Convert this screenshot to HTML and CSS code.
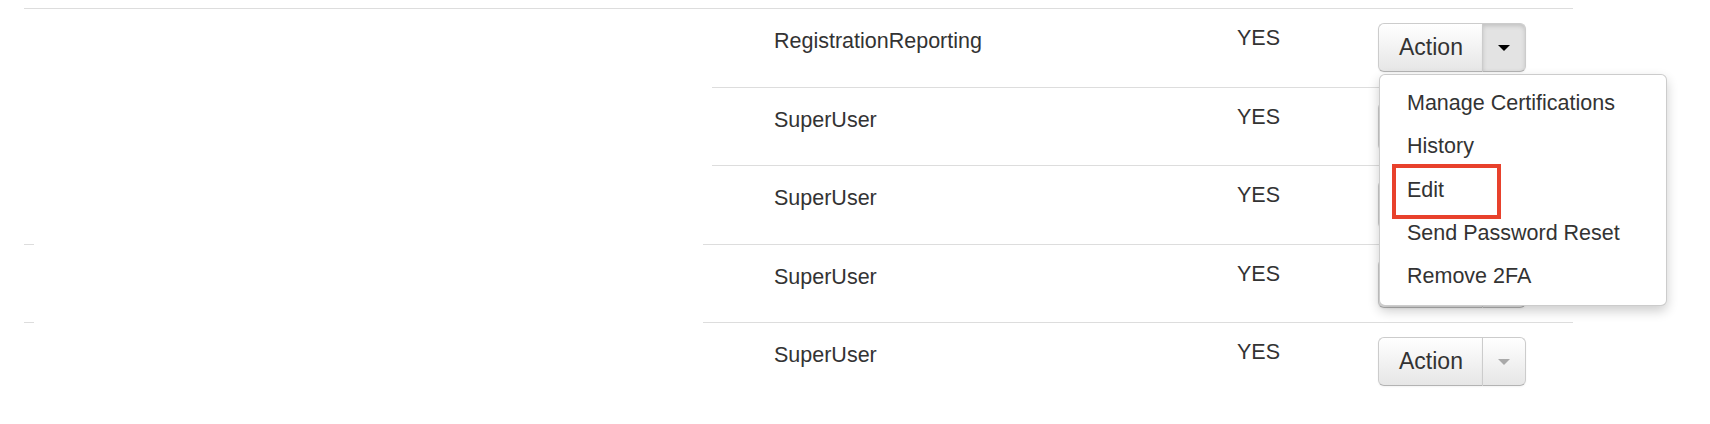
FILE: index.html
```html
<!DOCTYPE html>
<html lang="en">
<head>
  <meta charset="UTF-8">
  <title>Users</title>
  <link rel="stylesheet" href="styles.css">
</head>
<body>

<div class="users">
  <div class="row first">
    <div class="lead"></div>
    <div class="main">
      <div class="cell name">RegistrationReporting</div>
      <div class="cell flag">YES</div>
      <div class="cell actions">
        <div class="btn-group open">
          <button class="btn">Action</button>
          <button class="btn toggle"><span class="caret"></span></button>
          <ul class="menu">
            <li>Manage Certifications</li>
            <li>History</li>
            <li class="marked">Edit</li>
            <li>Send Password Reset</li>
            <li>Remove 2FA</li>
          </ul>
        </div>
      </div>
    </div>
  </div>

  <div class="row inset">
    <div class="lead"></div>
    <div class="main">
      <div class="cell name">SuperUser</div>
      <div class="cell flag">YES</div>
      <div class="cell actions">
        <div class="btn-group">
          <button class="btn">Action</button>
          <button class="btn toggle"><span class="caret"></span></button>
        </div>
      </div>
    </div>
  </div>

  <div class="row inset">
    <div class="lead"></div>
    <div class="main">
      <div class="cell name">SuperUser</div>
      <div class="cell flag">YES</div>
      <div class="cell actions">
        <div class="btn-group">
          <button class="btn">Action</button>
          <button class="btn toggle"><span class="caret"></span></button>
        </div>
      </div>
    </div>
  </div>

  <div class="row stub">
    <div class="lead"></div>
    <div class="main">
      <div class="cell name">SuperUser</div>
      <div class="cell flag">YES</div>
      <div class="cell actions">
        <div class="btn-group">
          <button class="btn">Action</button>
          <button class="btn toggle"><span class="caret"></span></button>
        </div>
      </div>
    </div>
  </div>

  <div class="row stub">
    <div class="lead"></div>
    <div class="main">
      <div class="cell name">SuperUser</div>
      <div class="cell flag">YES</div>
      <div class="cell actions">
        <div class="btn-group">
          <button class="btn">Action</button>
          <button class="btn toggle"><span class="caret"></span></button>
        </div>
      </div>
    </div>
  </div>
</div>

</body>
</html>
```

FILE: styles.css
```css
body { margin: 8px 0 0 24px; font-family: "Liberation Sans", Arial, sans-serif; color: #333; background: #fff; }

.users { width: 1549px; }
.row { display: flex; height: 78.5px; }
.lead { width: 679px; border-top: 1px solid transparent; }
.row.first .lead { border-top-color: #dddddd; }
.row.stub .lead::before {
  content: '';
  display: block;
  width: 10px;
  margin-top: -1px;
  border-top: 1px solid #dddddd;
}
.main { flex: 1; display: flex; border-top: 1px solid #dddddd; }
.row.inset .main { margin-left: 9px; }

.cell { font-size: 21.5px; line-height: 24px; }
.name { flex: 1; padding: 20px 0 0 71px; }
.row.inset .name { padding-left: 62px; }
.flag { width: 141px; padding-top: 17px; }
.actions { width: 195px; padding-top: 14px; }

.btn-group { position: relative; display: inline-flex; }
.btn {
  box-sizing: border-box;
  width: 104px;
  height: 49px;
  margin: 0;
  padding: 0 18px 0 19px;
  font-family: "Liberation Sans", Arial, sans-serif;
  font-size: 23px;
  color: #333;
  background: linear-gradient(#ffffff, #e6e6e6);
  border: 1px solid #cccccc;
  border-right: none;
  border-bottom-color: #b3b3b3;
  border-radius: 6px 0 0 6px;
  box-shadow: inset 0 1px 0 rgba(255,255,255,.2), 0 1px 2px rgba(0,0,0,.05);
}
.btn.toggle {
  width: 44px;
  padding: 0;
  display: flex;
  align-items: center;
  justify-content: center;
  border-right: 1px solid #cccccc;
  border-radius: 0 6px 6px 0;
}
.open .btn.toggle {
  background: #e3e3e3;
  box-shadow: inset 0 2px 4px rgba(0,0,0,.15), 0 1px 2px rgba(0,0,0,.05);
}
.caret {
  width: 0;
  height: 0;
  border-top: 6px solid #000;
  border-left: 6px solid transparent;
  border-right: 6px solid transparent;
  opacity: .3;
  margin-top: 1px;
}
.open .caret { opacity: 1; }

.menu {
  position: absolute;
  top: 100%;
  left: 1px;
  z-index: 10;
  box-sizing: border-box;
  width: 288px;
  margin: 2px 0 0;
  padding: 7px 0;
  list-style: none;
  background: #fff;
  border: 1px solid rgba(0,0,0,.2);
  border-radius: 6px;
  box-shadow: 0 5px 12px rgba(0,0,0,.2);
}
.menu li {
  padding: 0 27px;
  font-size: 21.5px;
  line-height: 43.25px;
  white-space: nowrap;
}
.menu li.marked { position: relative; }
.menu li.marked::after {
  content: '';
  position: absolute;
  left: 12px;
  top: -4.5px;
  width: 109px;
  height: 55px;
  box-sizing: border-box;
  border: 4px solid #e8412c;
}
```
